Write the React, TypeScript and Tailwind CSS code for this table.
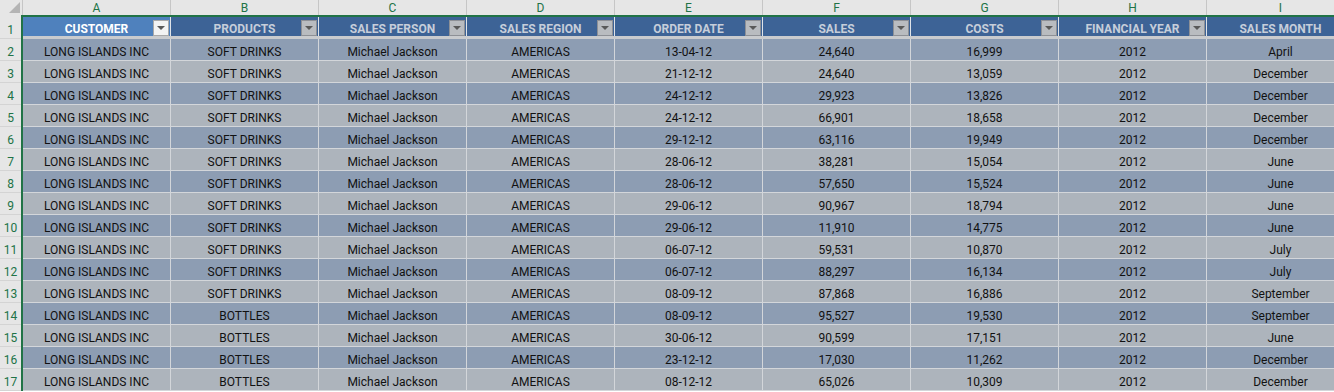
import React from 'react';

// Excel-style table: CUSTOMER sales sheet, whole table selected

const columns = [
  { letter: 'A', title: 'CUSTOMER' },
  { letter: 'B', title: 'PRODUCTS' },
  { letter: 'C', title: 'SALES PERSON' },
  { letter: 'D', title: 'SALES REGION' },
  { letter: 'E', title: 'ORDER DATE' },
  { letter: 'F', title: 'SALES' },
  { letter: 'G', title: 'COSTS' },
  { letter: 'H', title: 'FINANCIAL YEAR' },
  { letter: 'I', title: 'SALES MONTH' },
];

const rows: string[][] = [
  ['SOFT DRINKS', '13-04-12', '24,640', '16,999', 'April'],
  ['SOFT DRINKS', '21-12-12', '24,640', '13,059', 'December'],
  ['SOFT DRINKS', '24-12-12', '29,923', '13,826', 'December'],
  ['SOFT DRINKS', '24-12-12', '66,901', '18,658', 'December'],
  ['SOFT DRINKS', '29-12-12', '63,116', '19,949', 'December'],
  ['SOFT DRINKS', '28-06-12', '38,281', '15,054', 'June'],
  ['SOFT DRINKS', '28-06-12', '57,650', '15,524', 'June'],
  ['SOFT DRINKS', '29-06-12', '90,967', '18,794', 'June'],
  ['SOFT DRINKS', '29-06-12', '11,910', '14,775', 'June'],
  ['SOFT DRINKS', '06-07-12', '59,531', '10,870', 'July'],
  ['SOFT DRINKS', '06-07-12', '88,297', '16,134', 'July'],
  ['SOFT DRINKS', '08-09-12', '87,868', '16,886', 'September'],
  ['BOTTLES', '08-09-12', '95,527', '19,530', 'September'],
  ['BOTTLES', '30-06-12', '90,599', '17,151', 'June'],
  ['BOTTLES', '23-12-12', '17,030', '11,262', 'December'],
  ['BOTTLES', '08-12-12', '65,026', '10,309', 'December'],
];

const FilterButton = ({ active }: { active?: boolean }) => (
  <div
    className={
      'absolute right-[1px] bottom-0 w-4 h-4 border flex items-center justify-center ' +
      (active ? 'bg-[#f3f3f3] border-[#a9a9a9]' : 'bg-[#b9bcc0] border-[#8d9096]')
    }
  >
    <div className="w-0 h-0 border-l-[4px] border-r-[4px] border-t-[4px] border-l-transparent border-r-transparent border-t-[#595959]" />
  </div>
);

export default function App() {
  return (
    <div
      className="w-[1334px] h-[392px] overflow-hidden bg-white text-[12px] text-[#111]"
      style={{ fontFamily: 'Roboto, "Liberation Sans", sans-serif' }}
    >
      {/* column letters */}
      <div className="flex h-[15px] bg-[#e6e6e6]">
        <div className="w-[23px] shrink-0 border-r border-[#c6c6c6] flex items-end justify-end pr-[2px] pb-[2px]">
          <svg width="11" height="11" viewBox="0 0 11 11">
            <polygon points="11,0 11,11 0,11" fill="#b4b4b4" />
          </svg>
        </div>
        {columns.map((c) => (
          <div
            key={c.letter}
            className="w-[148px] shrink-0 border-r border-[#c6c6c6] flex items-center justify-center text-[12px] leading-none text-[#217346]"
          >
            {c.letter}
          </div>
        ))}
      </div>

      <div className="flex">
        {/* row numbers */}
        <div className="w-[21px] shrink-0 bg-[#e6e6e6] pt-[2px]">
          <div className="h-[22px] pt-[4px] border-b border-[#d4d4d4] flex items-center justify-center text-[12px] text-[#217346]">
            1
          </div>
          {rows.map((_, i) => (
            <div
              key={i}
              className="h-[22px] pt-[5px] border-b border-[#d4d4d4] flex items-center justify-center text-[12px] text-[#217346]"
            >
              {i + 2}
            </div>
          ))}
        </div>

        {/* table with selection border */}
        <div className="border-l-2 border-t-2 border-[#217346] flex-1 min-w-0">
          <div className="flex h-[22px] border-b-[3px] border-[#c9cbce]">
            {columns.map((c, i) => (
              <div
                key={c.letter}
                className={
                  'relative w-[148px] shrink-0 pt-[4px] border-r border-[#dfe3e8] flex items-center justify-center font-bold text-[12px] ' +
                  (i === 0 ? 'bg-[#4f81bd] text-white' : 'bg-[#3d6396] text-[#c6ceda]')
                }
              >
                {c.title}
                {i < 8 && <FilterButton active={i === 0} />}
              </div>
            ))}
          </div>
          {rows.map((r, ri) => {
            const cells = [
              'LONG ISLANDS INC',
              r[0],
              'Michael Jackson',
              'AMERICAS',
              r[1],
              r[2],
              r[3],
              '2012',
              r[4],
            ];
            return (
              <div
                key={ri}
                className={
                  'flex h-[22px] border-b border-[#d3d6da] ' +
                  (ri % 2 === 0 ? 'bg-[#8d9db3]' : 'bg-[#adb4bc]')
                }
              >
                {cells.map((v, ci) => (
                  <div
                    key={ci}
                    className="w-[148px] shrink-0 pt-[5px] border-r border-[#d3d6da] flex items-center justify-center"
                  >
                    {v}
                  </div>
                ))}
              </div>
            );
          })}
        </div>
      </div>
    </div>
  );
}
